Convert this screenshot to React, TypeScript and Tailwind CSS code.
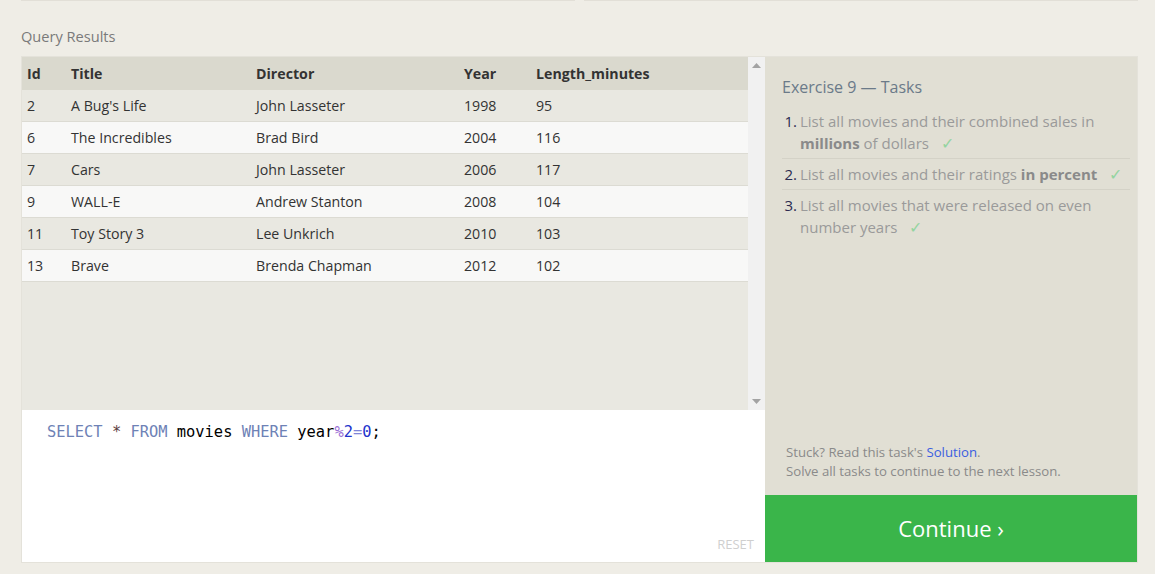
const movies = [
  { id: "2", title: "A Bug's Life", director: "John Lasseter", year: "1998", length: "95" },
  { id: "6", title: "The Incredibles", director: "Brad Bird", year: "2004", length: "116" },
  { id: "7", title: "Cars", director: "John Lasseter", year: "2006", length: "117" },
  { id: "9", title: "WALL-E", director: "Andrew Stanton", year: "2008", length: "104" },
  { id: "11", title: "Toy Story 3", director: "Lee Unkrich", year: "2010", length: "103" },
  { id: "13", title: "Brave", director: "Brenda Chapman", year: "2012", length: "102" },
];

function Check() {
  return <span className="ml-[12px] text-[16px] text-[#94d4a0]">✓</span>;
}

export default function App() {
  return (
    <div className="min-h-screen bg-[#efede6] font-['Open_Sans',sans-serif] text-[14px]">
      <div className="pl-[21px] pr-[17px]">
        {/* bottom edges of the boxes above */}
        <div className="flex gap-[9px]">
          <div className="h-px flex-1 bg-[#e2dfd7]" />
          <div className="h-px flex-1 bg-[#e2dfd7]" />
        </div>

        <div className="mt-[25px] h-[20px] leading-[20px] text-[14.6px] text-[#7a7a7a]">Query Results</div>

        <div className="mt-[10px] flex h-[507px] border border-[#e4e2da]">
          {/* Left: results + editor */}
          <div className="flex w-[743px] flex-col">
            <div className="flex h-[353px]">
              <div className="flex-1 bg-[#e9e8e1] text-[14.2px] text-[#333]">
                <div className="grid h-[33px] grid-cols-[44px_185px_208px_72px_1fr] items-center bg-[#dad9ce] font-bold">
                  <div className="px-[5px]">Id</div>
                  <div className="px-[5px]">Title</div>
                  <div className="px-[5px]">Director</div>
                  <div className="px-[5px]">Year</div>
                  <div className="px-[5px]">Length_minutes</div>
                </div>
                {movies.map((m, i) => (
                  <div
                    key={m.id}
                    className={`grid h-[32px] grid-cols-[44px_185px_208px_72px_1fr] items-center border-b border-[#dcdbd3] ${
                      i % 2 === 0 ? "bg-[#e9e8e1]" : "bg-[#f8f8f7]"
                    }`}
                  >
                    <div className="px-[5px]">{m.id}</div>
                    <div className="px-[5px]">{m.title}</div>
                    <div className="px-[5px]">{m.director}</div>
                    <div className="px-[5px]">{m.year}</div>
                    <div className="px-[5px]">{m.length}</div>
                  </div>
                ))}
              </div>
              <div className="flex w-[17px] flex-col items-center justify-between bg-[#f1f1f1] py-[6px]">
                <svg width="9" height="5" viewBox="0 0 9 5">
                  <path d="M0 5 L4.5 0 L9 5 Z" fill="#a3a3a3" />
                </svg>
                <svg width="9" height="5" viewBox="0 0 9 5">
                  <path d="M0 0 L4.5 5 L9 0 Z" fill="#a3a3a3" />
                </svg>
              </div>
            </div>
            <div className="relative flex-1 bg-white pl-[25px] pt-[11px]">
              <div className="font-['DejaVu_Sans_Mono',monospace] text-[15.4px] leading-[22px] text-black">
                <span className="text-[#6e82b6]">SELECT</span>{" "}
                <span className="text-[#5a3e3e]">*</span>{" "}
                <span className="text-[#6e82b6]">FROM</span> movies{" "}
                <span className="text-[#6e82b6]">WHERE</span> year
                <span className="text-[#9b6fd6]">%</span>
                <span className="text-[#2233cc]">2</span>
                <span className="text-[#7f86d8]">=</span>
                <span className="text-[#2233cc]">0</span>;
              </div>
              <div className="absolute bottom-[8px] right-[11px] text-[13px] text-[#cfcfcf]">RESET</div>
            </div>
          </div>

          {/* Right: tasks */}
          <div className="flex flex-1 flex-col">
            <div className="flex flex-1 flex-col bg-[#e1dfd4] pl-[17px] pr-[7px] pt-[19px]">
              <div className="text-[16px] leading-[22px] text-[#6b7a89]">Exercise 9 — Tasks</div>
              <ol className="mt-[12px] text-[15px] leading-[22px] text-[#9a9a9a]">
                <li className="flex border-b border-[#d4d2c7] pb-[4px]">
                  <span className="w-[18px] shrink-0 text-right pr-[3px] text-[#2b2b50]">1.</span>
                  <span>
                    List all movies and their combined sales in <b className="text-[#8a8a8a]">millions</b> of dollars
                    <Check />
                  </span>
                </li>
                <li className="flex border-b border-[#d4d2c7] py-[4px]">
                  <span className="w-[18px] shrink-0 text-right pr-[3px] text-[#2b2b50]">2.</span>
                  <span>
                    List all movies and their ratings <b className="text-[#8a8a8a]">in percent</b>
                    <Check />
                  </span>
                </li>
                <li className="flex py-[4px]">
                  <span className="w-[18px] shrink-0 text-right pr-[3px] text-[#2b2b50]">3.</span>
                  <span>
                    List all movies that were released on even number years
                    <Check />
                  </span>
                </li>
              </ol>
              <div className="mt-auto pb-[14px] pl-[4px] text-[13.2px] leading-[19px] text-[#8a8a8a]">
                <div>
                  Stuck? Read this task's <span className="text-[#3a5ee0]">Solution</span>.
                </div>
                <div>Solve all tasks to continue to the next lesson.</div>
              </div>
            </div>
            <div className="flex h-[67px] items-center justify-center bg-[#3ab54a] text-[22px] text-white">
              Continue ›
            </div>
          </div>
        </div>
      </div>
    </div>
  );
}
